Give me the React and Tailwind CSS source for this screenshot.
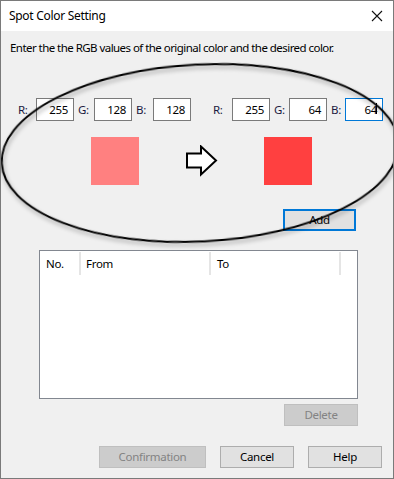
import React from "react";

const font = { fontFamily: '"Noto Sans", "Open Sans", sans-serif' };

function Field({ label, value, labelW, focused, caret }) {
  return (
    <div className="flex items-center">
      <span className={`${labelW} text-[11.5px] tracking-[-0.3px] text-[#1a1a40]`}>{label}</span>
      <div
        className={`relative w-[38px] h-[23px] bg-white flex items-center justify-end pr-[5px] text-[11.5px] tracking-[-0.3px] text-black ${
          focused ? "border border-[#0078d7]" : "border border-[#7a7a7a]"
        }`}
      >
        {value}
        {caret && (
          <div className="absolute left-[30px] top-[4px] w-[1px] h-[11px] bg-black" />
        )}
      </div>
    </div>
  );
}

function Btn({ children, w, disabled, focused }) {
  let cls = "border border-[#adadad] bg-[#e1e1e1] text-black";
  if (disabled) cls = "border border-[#bfbfbf] bg-[#cccccc] text-[#838383]";
  if (focused) cls = "border-2 border-[#0078d7] bg-[#e1e1e1] text-black";
  return (
    <div className={`${w} h-[22px] flex items-center justify-center text-[11.5px] tracking-[-0.3px] ${cls}`}>
      {children}
    </div>
  );
}

export default function App() {
  return (
    <div
      className="relative w-[394px] h-[479px] bg-[#f0f0f0] border border-[#7a7a7a] overflow-hidden"
      style={font}
    >
      {/* Title bar */}
      <div className="h-[30px] bg-white flex items-center justify-between pl-[8px] pr-[8px]">
        <span className="text-[12px] tracking-[-0.3px] text-black">Spot Color Setting</span>
        <svg width="14" height="14" viewBox="0 0 14 14" className="mr-[1px]">
          <path d="M2 2 L12 12 M12 2 L2 12" stroke="#111" strokeWidth="1.1" />
        </svg>
      </div>

      {/* Body */}
      <div className="flex flex-col">
        <div className="pl-[9px] mt-[10px] text-[11.5px] leading-[14px] tracking-[-0.55px] text-black">
          Enter the the RGB values of the original color and the desired color.
        </div>

        {/* inputs row */}
        <div className="flex mt-[43px] pl-[17px]">
          <Field label="R:" value="255" labelW="w-[18px]" />
          <div className="w-[4px]" />
          <Field label="G:" value="128" labelW="w-[16px]" />
          <div className="w-[4px]" />
          <Field label="B:" value="128" labelW="w-[17px]" />
          <div className="w-[22px]" />
          <Field label="R:" value="255" labelW="w-[19px]" />
          <div className="w-[4px]" />
          <Field label="G:" value="64" labelW="w-[15px]" />
          <div className="w-[4px]" />
          <Field label="B:" value="64" labelW="w-[14px]" focused caret />
        </div>

        {/* swatches row */}
        <div className="flex items-center mt-[16px] pl-[90px] h-[48px]">
          <div className="w-[48px] h-[48px] bg-[#ff8080]" />
          <div className="ml-[47px] w-[32px] h-[32px] flex items-center">
            <svg width="32" height="32" viewBox="0 0 32 32">
              <path
                d="M1 8.5 L15 8.5 L15 1.5 L30 15.5 L15 29.5 L15 22.5 L1 22.5 Z"
                fill="white"
                stroke="black"
                strokeWidth="2"
                strokeLinejoin="miter"
              />
            </svg>
          </div>
          <div className="ml-[46px] w-[48px] h-[48px] bg-[#ff4040]" />
        </div>

        {/* Add */}
        <div className="flex justify-end pr-[37px] mt-[24px]">
          <Btn w="w-[73px]" focused>Add</Btn>
        </div>

        {/* list */}
        <div className="ml-[38px] mt-[19px] w-[319px] h-[149px] bg-white border border-[#828790]">
          <div className="flex h-[25px] items-center text-[11.5px] tracking-[-0.3px] text-black">
            <div className="w-[41px] h-[23px] flex items-center pl-[6px] border-r-[2px] border-[#e5e5e5]">No.</div>
            <div className="w-[130px] h-[23px] flex items-center pl-[5px] border-r-[2px] border-[#e5e5e5]">From</div>
            <div className="w-[130px] h-[23px] flex items-center pl-[6px] border-r-[2px] border-[#e5e5e5]">To</div>
          </div>
        </div>

        {/* Delete */}
        <div className="flex justify-end pr-[35px] mt-[5px]">
          <Btn w="w-[74px]" disabled>Delete</Btn>
        </div>

        {/* bottom buttons */}
        <div className="flex justify-end pr-[11px] mt-[20px] gap-[14px]">
          <Btn w="w-[107px]" disabled>Confirmation</Btn>
          <Btn w="w-[74px]">Cancel</Btn>
          <Btn w="w-[74px]">Help</Btn>
        </div>
      </div>

      {/* annotation ellipse overlay */}
      <svg
        className="absolute left-0 top-0 pointer-events-none"
        width="394"
        height="479"
        viewBox="-1 -1 394 479"
      >
        <defs>
          <filter id="sh" x="-10%" y="-10%" width="120%" height="130%">
            <feDropShadow dx="1" dy="3" stdDeviation="2" floodColor="#000" floodOpacity="0.35" />
          </filter>
        </defs>
        <ellipse
          cx="198"
          cy="151"
          rx="198.5"
          ry="88.5"
          transform="rotate(-3 198 151)"
          fill="none"
          stroke="#000"
          strokeWidth="2"
          filter="url(#sh)"
        />
      </svg>
    </div>
  );
}
